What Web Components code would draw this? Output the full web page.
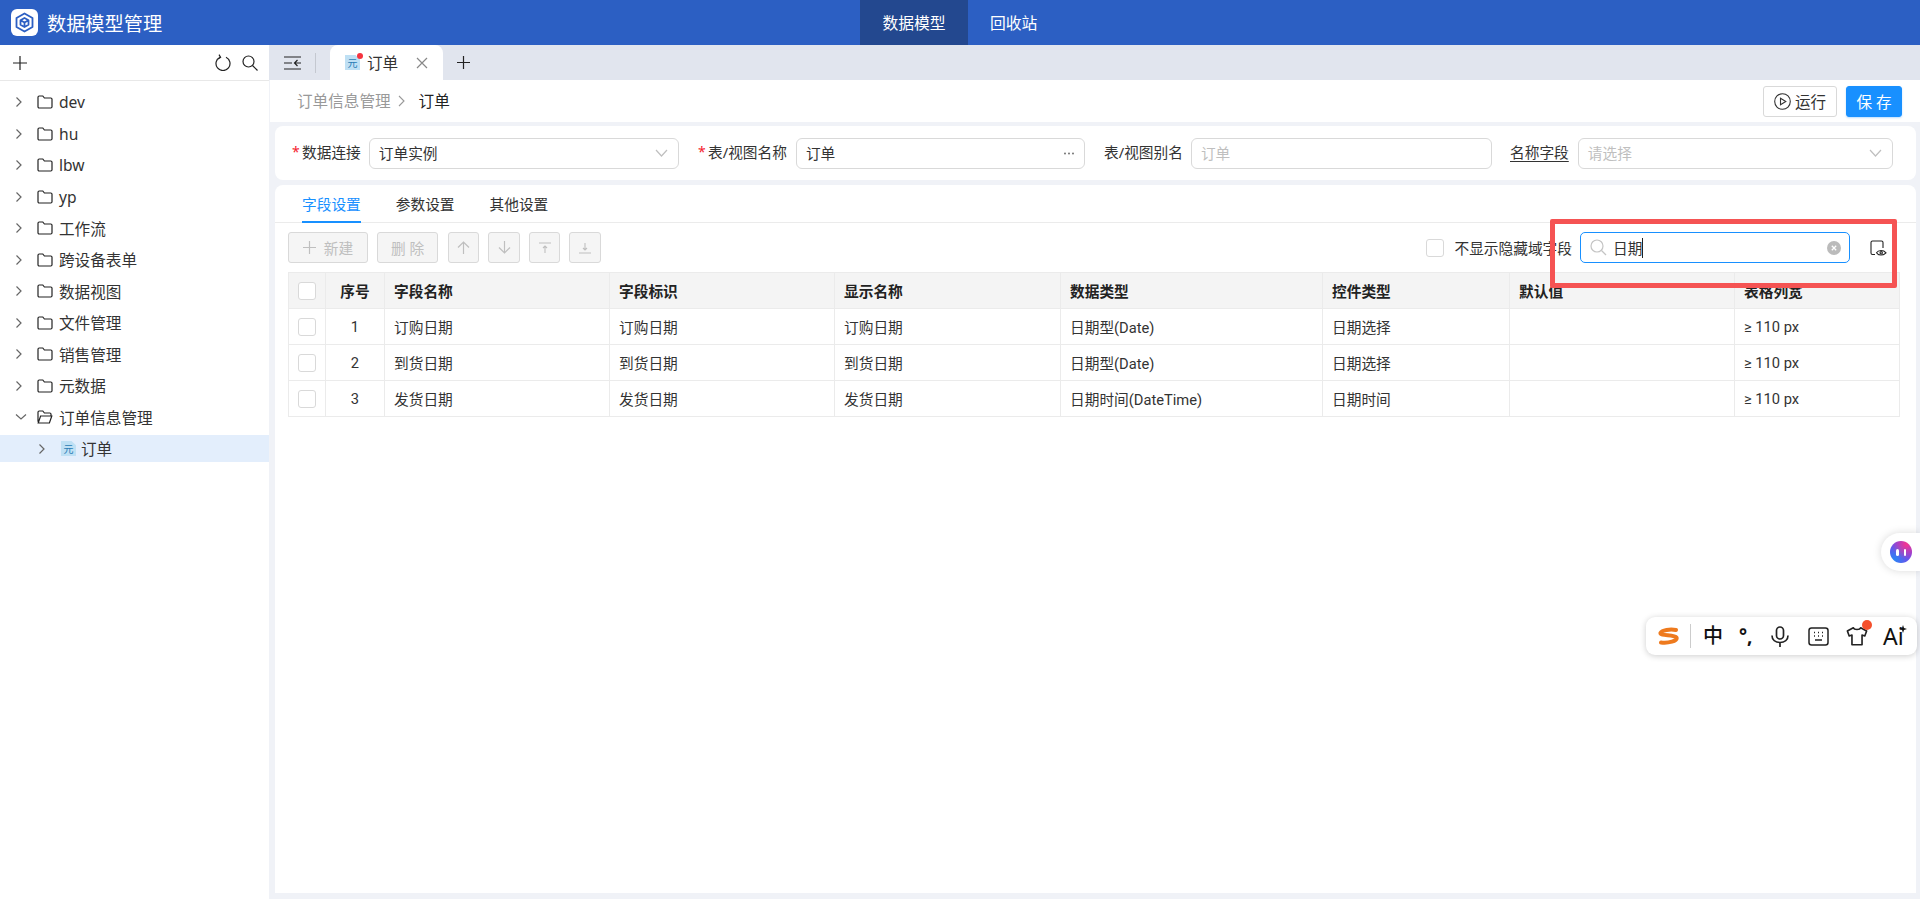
<!DOCTYPE html>
<html lang="zh">
<head>
<meta charset="utf-8">
<title>数据模型管理</title>
<style>
html,body{margin:0;height:100%;overflow:hidden;background:#fff;}
body{font-family:"Noto Sans","Noto Sans CJK SC",sans-serif;font-size:14.7px;color:#333;}
</style>
</head>
<body>
<dm-app></dm-app>
<script>
const FONT = '"Noto Sans","Noto Sans CJK SC",sans-serif'

class Base extends HTMLElement {
  constructor() {
    super();
    this.attachShadow({ mode: 'open' });
    const template = document.createElement('template');
    template.innerHTML = this.html;
    this.shadowRoot.appendChild(template.content.cloneNode(true));
  }
  get html() { return '' }
}

const chevronR = `<svg width="8" height="12" viewBox="0 0 8 12" fill="none" stroke="#666" stroke-width="1.2"><path d="M1.5 1.5 6 6l-4.5 4.5"/></svg>`
const chevronD = `<svg width="12" height="8" viewBox="0 0 12 8" fill="none" stroke="#666" stroke-width="1.2"><path d="M1 1.5 6 6l5-4.5"/></svg>`
const folderClosed = `<svg width="16" height="14" viewBox="0 0 16 14" fill="none" stroke="#222" stroke-width="1.2"><path d="M1 2.2C1 1.5 1.5 1 2.2 1h3.6l1.6 2h6.4c.7 0 1.2.5 1.2 1.2v7.6c0 .7-.5 1.2-1.2 1.2H2.2C1.5 13 1 12.5 1 11.8z"/></svg>`
const folderOpen = `<svg width="16" height="14" viewBox="0 0 16 14" fill="none" stroke="#222" stroke-width="1.2"><path d="M1 11.8V2.2C1 1.5 1.5 1 2.2 1h3.6l1.6 2h5.4c.7 0 1.2.5 1.2 1.2V6M1.2 13 3.6 6h11.2l-2.4 7z"/></svg>`

class FileBadge extends Base {
  get html() { return `
    <style>
    :host{display:inline-block;width:15px;height:15px;position:relative;}
    .b{width:15px;height:15px;background:#bfe0f4;color:#2a7cb4;font:10px/15px "Noto Sans CJK SC",sans-serif;text-align:center;clip-path:polygon(0 0,70% 0,100% 28%,100% 100%,0 100%);}
    </style>
    <div class="b">元</div>
    <slot></slot>
  `}
}
customElements.define('file-badge', FileBadge)

class TreeRow extends Base {
  static get observedAttributes() { return ['open'] }
  get html() { return `
    <style>
    :host{display:flex;align-items:center;height:27px;margin-bottom:4.5px;font-size:15.6px;color:#333;padding-left:15px;}
    :host([selected]){background:#e3eefc;padding-left:38px;}
    .arrow{width:22px;flex:none;display:flex;align-items:center;}
    .ic{width:22px;height:14px;flex:none;display:flex;align-items:center;}
    :host([selected]) .ic{width:20px;height:15px;margin-left:1px;}
    </style>
    <span class="arrow" id="arrow">${chevronR}</span>
    <span class="ic" id="ic"><slot name="icon">${folderClosed}</slot></span>
    <slot></slot>
  `}
  attributeChangedCallback(name) {
    if (name === 'open') {
      this.shadowRoot.getElementById('arrow').innerHTML = chevronD
      this.shadowRoot.getElementById('ic').innerHTML = folderOpen
    }
  }
}
customElements.define('tree-row', TreeRow)

class SideTree extends Base {
  get html() { return `
    <style>
    :host{display:flex;flex-direction:column;width:269px;flex:none;background:#fff;}
    .tool{height:35px;border-bottom:1px solid #e8e8e8;display:flex;align-items:center;padding:0 11px 0 13px;gap:11px;}
    .tool svg{display:block;}
    .sp{flex:1;}
    .list{padding-top:7.5px;}
    </style>
    <div class="tool">
      <svg width="14" height="14" viewBox="0 0 14 14" stroke="#222" stroke-width="1.2"><path d="M7 0v14M0 7h14"/></svg>
      <span class="sp"></span>
      <svg width="16" height="17" viewBox="0 0 16 17" fill="none" stroke="#222" stroke-width="1.2"><path d="M5 3.2a7 7 0 1 0 6 0"/><path d="M4 .6 5.6 3.4 3 5"/></svg>
      <svg width="16" height="16" viewBox="0 0 16 16" fill="none" stroke="#222" stroke-width="1.2"><circle cx="6.5" cy="6.5" r="5.500"/><path d="M10.500 10.500 15.500 15.500"/></svg>
    </div>
    <div class="list"><slot></slot></div>
  `}
}
customElements.define('side-tree', SideTree)

class TopBar extends Base {
  get html() { return `
    <style>
    :host{display:flex;align-items:stretch;height:45px;background:#2c5fc3;color:#fff;position:relative;}
    .brand{display:flex;align-items:center;width:860px;flex:none;padding-left:11px;box-sizing:border-box;font-size:19.2px;gap:9px;}
    .logo{width:27px;height:27px;background:#fff;border-radius:6px;display:flex;align-items:center;justify-content:center;}
    .nav{display:flex;font-size:15.8px;}
    .nav div{display:flex;align-items:center;padding:0 22px;}
    .nav .on{background:#23488f;width:108px;box-sizing:border-box;justify-content:center;padding:0;}
    </style>
    <div class="brand">
      <span class="logo"><svg width="21" height="21" viewBox="0 0 21 21" fill="none" stroke="#2c5fc3" stroke-width="1.8" stroke-linejoin="round"><path d="M10.5 1.5 18.500 6v9l-8 4.500-8-4.500V6z"/><path d="M6.500 8.200 10.500 6l4 2.200v4.600l-4 2.200-4-2.200zM6.500 8.200l4 2.300 4-2.300M10.500 10.500V15"/></svg></span>
      <span>数据模型管理</span>
    </div>
    <div class="nav"><div class="on">数据模型</div><div>回收站</div></div>
  `}
}
customElements.define('top-bar', TopBar)

class TabStrip extends Base {
  get html() { return `
    <style>
    :host{display:flex;align-items:center;height:35px;background:#e1e5ee;padding-left:15px;flex:none;}
    svg{display:block;}
    .div{width:1px;height:20px;background:#c4c8d0;margin:0 14px 0 13px;}
    .tab{width:113px;height:35px;background:#fff;border-radius:8px 8px 0 0;display:flex;align-items:center;padding-left:15px;box-sizing:border-box;font-size:15.6px;position:relative;}
    .dot{position:absolute;left:27px;top:8px;width:6px;height:6px;border-radius:50%;background:#f5333f;}
    .tab span.t{margin-left:7px;width:49px;}
    .plus{margin-left:14px;}
    </style>
    <svg width="18" height="14" viewBox="0 0 18 14" fill="none" stroke="#222" stroke-width="1.2"><path d="M0 1h17M0 13h17M0 7h8M17 7H10.500M13.500 4 10.500 7l3 3"/></svg>
    <span class="div"></span>
    <div class="tab">
      <file-badge></file-badge><span class="dot"></span>
      <span class="t">订单</span>
      <svg width="12" height="12" viewBox="0 0 12 12" stroke="#888" stroke-width="1.2"><path d="M1 1l10 10M11 1 1 11"/></svg>
    </div>
    <svg class="plus" width="13" height="13" viewBox="0 0 13 13" stroke="#222" stroke-width="1.2"><path d="M6.500 0v13M0 6.500h13"/></svg>
  `}
}
customElements.define('tab-strip', TabStrip)

class DmBtn extends Base {
  get html() { return `
    <style>
    :host{display:inline-flex;align-items:center;justify-content:center;height:31px;box-sizing:border-box;border:1px solid #d9d9d9;border-radius:3px;background:#fff;color:#333;font-size:14.7px;gap:4px;flex:none;}
    :host([disabled]){background:#f5f5f5;color:#bfbfbf;}
    :host([primary]){background:#1890ff;border-color:#1890ff;color:#fff;box-shadow:0 1px 2px rgba(24,144,255,.3);}
    ::slotted(svg){display:block;}
    </style>
    <slot></slot>
  `}
}
customElements.define('dm-btn', DmBtn)

class CrumbBar extends Base {
  get html() { return `
    <style>
    :host{display:flex;align-items:center;height:42px;background:#fff;margin-left:1px;padding:0 18px 0 27px;font-size:15.6px;flex:none;}
    .g{color:#999;padding-bottom:2px;}
    svg{margin:0 14px 0 7px;display:block;}
    .d{color:#222;flex:1;padding-bottom:2px;}
    .btns{display:flex;gap:9px;}
    </style>
    <span class="g">订单信息管理</span>
    <svg width="7" height="12" viewBox="0 0 7 12" fill="none" stroke="#999" stroke-width="1.1"><path d="M1 1l5 5-5 5"/></svg>
    <span class="d">订单</span>
    <div class="btns"><slot></slot></div>
  `}
}
customElements.define('crumb-bar', CrumbBar)

class FormItem extends Base {
  get html() { return `
    <style>
    :host{display:flex;align-items:center;flex:none;font-size:14.7px;color:#333;}
    .star{color:#f5222d;width:10px;font-size:14px;display:none;padding-bottom:3px;}
    :host([required]) .star{display:inline;}
    .lb{white-space:nowrap;padding-bottom:3px;}
    :host([link]) .lb{text-decoration:underline;text-underline-offset:3px;}
    .box{height:31px;box-sizing:border-box;border:1px solid #d9d9d9;border-radius:6px;display:flex;align-items:center;padding:0 10px 0 9px;background:#fff;flex:1;}
    .val{flex:1;padding-bottom:1px;}
    :host([empty]) .val{color:#bfbfbf;}
    svg{display:block;}
    </style>
    <span class="star">*</span><span class="lb" id="lb"></span>
    <div class="box" id="box"><span class="val" id="val"></span><span id="end"></span></div>
  `}
  connectedCallback() {
    this.shadowRoot.getElementById('lb').textContent = this.getAttribute('label')
    this.shadowRoot.getElementById('val').textContent = this.getAttribute('value')
    this.shadowRoot.getElementById('box').style.marginLeft = this.getAttribute('gap') + 'px'
    this.style.width = this.getAttribute('w') + 'px'
    const end = this.getAttribute('end')
    const el = this.shadowRoot.getElementById('end')
    if (end === 'select') el.innerHTML = `<svg width="13" height="8" viewBox="0 0 13 8" fill="none" stroke="#bfbfbf" stroke-width="1.2"><path d="M1 1l5.500 6L12 1"/></svg>`
    if (end === 'more') el.innerHTML = `<svg width="10" height="3" viewBox="0 0 10 3" fill="#666"><circle cx="1" cy="1.500" r=".9"/><circle cx="5" cy="1.500" r=".9"/><circle cx="9" cy="1.500" r=".9"/></svg>`
  }
}
customElements.define('form-item', FormItem)

class FormCard extends Base {
  get html() { return `
    <style>
    :host{display:flex;align-items:center;height:54px;background:#fff;border-radius:8px;margin:4px 4px 5px 6px;padding-left:17px;gap:0;flex:none;}
    </style>
    <slot></slot>
  `}
}
customElements.define('form-card', FormCard)

class CheckBox extends Base {
  get html() { return `
    <style>
    :host{display:block;width:18px;height:18px;box-sizing:border-box;border:1px solid #d9d9d9;border-radius:3px;background:#fff;flex:none;}
    </style>
  `}
}
customElements.define('check-box', CheckBox)

class FieldTable extends Base {
  get data(){return JSON.parse(this.getAttribute('data'))};
  set data(data){this.setAttribute('data',JSON.stringify(data))};
  static get observedAttributes() {return ['data']}

  get html() { return `
    <style>
    :host{display:block;margin:9px 16px 0 13px;font-size:14.7px;color:#333;}
    .row{display:grid;grid-template-columns:37px 59px 225px 225px 226px 262px 187px 225px 1fr;height:36px;box-sizing:border-box;border-bottom:1px solid #ebebeb;border-left:1px solid #ebebeb;}
    .head{background:#f4f4f4;font-weight:700;border-top:1px solid #ebebeb;height:37px;color:#222;}
    .row>div{display:flex;align-items:center;padding-left:9px;border-right:1px solid #ebebeb;min-width:0;white-space:nowrap;}
    .row>div.c{justify-content:center;padding-left:0;}
    .lat{font-family:Roboto,"Noto Sans CJK SC",sans-serif;}
    </style>
    <div class="row head">
      <div class="c"><check-box></check-box></div><div class="c">序号</div>
      <div>字段名称</div><div>字段标识</div><div>显示名称</div><div>数据类型</div><div>控件类型</div><div>默认值</div><div>表格列宽</div>
    </div>
    <div id="rowhost"></div>
  `}

  attributeChangedCallback(name, oldValue, newValue) {
    var host = this.shadowRoot.getElementById('rowhost')
    host.innerHTML = JSON.parse(newValue).map((item, i) => `
      <div class="row">
        <div class="c"><check-box></check-box></div><div class="c lat">${i + 1}</div>
        <div>${item.name}</div><div>${item.name}</div><div>${item.name}</div>
        <div class="lat">${item.type}</div><div>${item.ctrl}</div><div></div><div class="lat">≥ 110 px</div>
      </div>`).join('')
  }
}
customElements.define('field-table', FieldTable)

class FieldCard extends Base {
  get html() { return `
    <style>
    :host{display:block;flex:1;background:#fff;border-radius:8px 8px 0 0;margin:0 4px 6px 6px;font-size:14.7px;color:#333;min-height:0;}
    .tabs{display:flex;height:38px;border-bottom:1px solid #ebebeb;padding-left:27px;gap:35px;box-sizing:border-box;}
    .tabs div{display:flex;align-items:center;height:38px;box-sizing:border-box;padding-bottom:2px;}
    .tabs .on{color:#1890ff;border-bottom:2px solid #1890ff;padding-bottom:0;}
    .bar{display:flex;align-items:center;height:31px;margin-top:9px;padding-left:13px;}
    .bar dm-btn+dm-btn{margin-left:9px;}
    .bar dm-btn.up{margin-left:10px;}
    svg{display:block;}
    .sp{flex:1;}
    .lab{margin-left:10px;white-space:nowrap;}
    .search{width:270px;height:31px;box-sizing:border-box;border:1px solid #1890ff;border-radius:5px;display:flex;align-items:center;margin-left:8px;padding:0 8px 0 9px;flex:none;}
    .search .txt{margin-left:6px;color:#333;border-right:1px solid #222;line-height:20px;}
    .eye{margin:0 29px 0 20px;}
    </style>
    <div class="tabs"><div class="on">字段设置</div><div>参数设置</div><div>其他设置</div></div>
    <div class="bar">
      <dm-btn disabled style="width:80px"><svg width="13" height="13" viewBox="0 0 13 13" stroke="#bfbfbf" stroke-width="1.2"><path d="M6.500 0v13M0 6.500h13"/></svg>&nbsp;新建</dm-btn>
      <dm-btn disabled style="width:61px">删 除</dm-btn>
      <dm-btn class="up" disabled style="width:31px"><svg width="13" height="13" viewBox="0 0 13 13" fill="none" stroke="#bfbfbf" stroke-width="1.2"><path d="M6.500 13V1M1 6.500 6.500 1l5.500 5.500"/></svg></dm-btn>
      <dm-btn disabled style="width:32px"><svg width="13" height="13" viewBox="0 0 13 13" fill="none" stroke="#bfbfbf" stroke-width="1.2"><path d="M6.500 0v12M1 6.500 6.500 12 12 6.500"/></svg></dm-btn>
      <dm-btn disabled style="width:31px"><svg width="12" height="12" viewBox="0 0 12 12" fill="none" stroke="#bfbfbf" stroke-width="1.1"><path d="M0 1h12M6 11V4M4 6l2-2 2 2"/></svg></dm-btn>
      <dm-btn disabled style="width:32px"><svg width="12" height="12" viewBox="0 0 12 12" fill="none" stroke="#bfbfbf" stroke-width="1.1"><path d="M0 11h12M6 1v7M4 6l2 2 2-2"/></svg></dm-btn>
      <span class="sp"></span>
      <check-box></check-box>
      <span class="lab">不显示隐藏域字段</span>
      <div class="search">
        <svg width="17" height="17" viewBox="0 0 17 17" fill="none" stroke="#c4c4c4" stroke-width="1.2"><circle cx="7" cy="7" r="6"/><path d="M11.500 11.500 16 16"/></svg>
        <span class="txt">日期</span>
        <span class="sp"></span>
        <svg width="14" height="14" viewBox="0 0 14 14"><circle cx="7" cy="7" r="7" fill="#bbb"/><path d="M4.800 4.800l4.400 4.400M9.200 4.800 4.800 9.200" stroke="#fff" stroke-width="1.3"/></svg>
      </div>
      <svg class="eye" width="17" height="16" viewBox="0 0 17 16" fill="none" stroke="#222" stroke-width="1.1"><path d="M5 14.500H2.500C1.700 14.500 1 13.800 1 13V2.500C1 1.700 1.700 1 2.500 1h9C12.300 1 13 1.700 13 2.500V8"/><path d="M6.500 12.800c1.800-3 7-3 9.500 0-2.500 3-7.700 3-9.500 0z"/><circle cx="11.200" cy="12.800" r="1.200"/></svg>
    </div>
    <slot></slot>
  `}
}
customElements.define('field-card', FieldCard)

class ImeBar extends Base {
  get html() { return `
    <style>
    :host{position:absolute;left:1646px;top:617px;width:271px;height:38px;background:#fff;border-radius:9px;box-shadow:0 1px 6px rgba(0,0,0,.2);display:flex;align-items:center;box-sizing:border-box;padding-left:11px;color:#111;font-family:${FONT};}
    svg{display:block;flex:none;}
    .sep{width:1px;height:24px;background:#ccc;margin:0 12px 0 11px;}
    .zh{font-size:20px;width:20px;line-height:38px;text-align:center;font-weight:500;}
    .pt{width:13px;margin-left:16px;font-size:19px;line-height:34px;font-weight:700;}
    .shirt{position:relative;margin-left:17px;width:22px;height:22px;}
    .shirt i{position:absolute;right:-4px;top:-5px;width:10px;height:10px;border-radius:50%;background:#f5502c;}
    .ai{font-size:23px;margin-left:15px;line-height:38px;position:relative;color:#111;}
    .ai svg{position:absolute;right:-3px;top:8px;}
    </style>
    <svg width="22" height="19" viewBox="0 0 22 19" fill="none" stroke="#ee7a1e" stroke-width="4" stroke-linecap="round"><path d="M19 3C13 2 5 3 3.500 6c-1 3 14 1.500 16 4.500C21 14 11 16.500 4 15.500"/></svg>
    <span class="sep"></span>
    <span class="zh">中</span>
    <span class="pt">°,</span>
    <svg style="margin-left:19px" width="18" height="21" viewBox="0 0 18 21" fill="none" stroke="#222" stroke-width="1.7"><rect x="5.500" y="1" width="7" height="12" rx="3.500"/><path d="M1 9.500c0 4.500 3.500 7 8 7s8-2.500 8-7M9 16.500V21"/></svg>
    <svg style="margin-left:19px" width="21" height="19" viewBox="0 0 21 19" fill="none" stroke="#222" stroke-width="1.5"><rect x="1" y="1" width="19" height="17" rx="2.500"/><path d="M6 5.500h1M10 5.500h1M14 5.500h1M6 9h1M10 9h1M14 9h1M7 13h7" stroke-width="1.5"/></svg>
    <span class="shirt"><svg width="22" height="22" viewBox="0 0 24 22" fill="none" stroke="#222" stroke-width="1.8" stroke-linejoin="round"><path d="M8 2C9 4.500 15 4.500 16 2l6.500 3.500-2 5.500-3-1v10.500h-11V10l-3 1-2-5.500z"/></svg><i></i></span>
    <span class="ai">Ai<svg width="8" height="8" viewBox="0 0 8 8" fill="#111"><path d="M4 0 5 3 8 4 5 5 4 8 3 5 0 4 3 3z"/></svg></span>
  `}
}
customElements.define('ime-bar', ImeBar)

class AiBubble extends Base {
  get html() { return `
    <style>
    :host{position:absolute;left:1881px;top:533px;width:39px;height:38px;background:#fff;border-radius:19px 0 0 19px;box-shadow:0 0 8px rgba(0,0,0,.15);display:flex;align-items:center;padding-left:9px;box-sizing:border-box;}
    .o{width:22px;height:22px;border-radius:50%;background:radial-gradient(circle at 75% 15%,#f6358f 0,rgba(246,53,143,0) 60%),radial-gradient(circle at 20% 85%,#2b85f5 0,rgba(43,133,245,0) 70%),#7a45e8;display:flex;align-items:center;justify-content:center;gap:5px;}
    .o i{width:2.5px;height:7px;border-radius:2px;background:#fff;}
    </style>
    <div class="o"><i></i><i></i></div>
  `}
}
customElements.define('ai-bubble', AiBubble)

class RedMark extends Base {
  get html() { return `
    <style>
    :host{position:absolute;left:1550px;top:219px;width:347px;height:69px;box-sizing:border-box;border:5px solid #f55353;border-radius:2px;pointer-events:none;}
    </style>
  `}
}
customElements.define('red-mark', RedMark)

const TREE = ['dev','hu','lbw','yp','工作流','跨设备表单','数据视图','文件管理','销售管理','元数据']

class DmApp extends Base {
  get html() { return `
    <style>
    :host{display:flex;flex-direction:column;width:1920px;height:899px;position:relative;overflow:hidden;}
    .main{flex:1;display:flex;min-height:0;}
    .pane{flex:1;display:flex;flex-direction:column;background:#f0f2f7;min-width:0;}
    </style>
    <top-bar></top-bar>
    <div class="main">
      <side-tree>
        ${TREE.map(t => `<tree-row>${t}</tree-row>`).join('')}
        <tree-row open>订单信息管理</tree-row>
        <tree-row selected><file-badge slot="icon"></file-badge>订单</tree-row>
      </side-tree>
      <div class="pane">
        <tab-strip></tab-strip>
        <crumb-bar>
          <dm-btn style="width:74px;font-size:15.6px"><svg width="17" height="17" viewBox="0 0 17 17" fill="none" stroke="#333" stroke-width="1.1"><circle cx="8.500" cy="8.500" r="7.800"/><path d="M6.500 5.200 11.800 8.500 6.500 11.800z"/></svg>运行</dm-btn>
          <dm-btn primary style="width:56px;font-size:15.6px">保 存</dm-btn>
        </crumb-bar>
        <form-card>
          <form-item required label="数据连接" value="订单实例" end="select" gap="8" w="387"></form-item>
          <form-item required label="表/视图名称" value="订单" end="more" gap="9" w="387" style="margin-left:19px"></form-item>
          <form-item label="表/视图别名" value="订单" empty gap="8" w="388" style="margin-left:19px"></form-item>
          <form-item link label="名称字段" value="请选择" empty end="select" gap="9" w="383" style="margin-left:18px"></form-item>
        </form-card>
        <field-card>
          <field-table id="tbl"></field-table>
        </field-card>
      </div>
    </div>
    <ai-bubble></ai-bubble>
    <ime-bar></ime-bar>
    <red-mark></red-mark>
  `}
  connectedCallback() {
    this.shadowRoot.getElementById('tbl').data = [
      { name: '订购日期', type: '日期型(Date)', ctrl: '日期选择' },
      { name: '到货日期', type: '日期型(Date)', ctrl: '日期选择' },
      { name: '发货日期', type: '日期时间(DateTime)', ctrl: '日期时间' }
    ]
  }
}
customElements.define('dm-app', DmApp)
</script>
</body>
</html>
